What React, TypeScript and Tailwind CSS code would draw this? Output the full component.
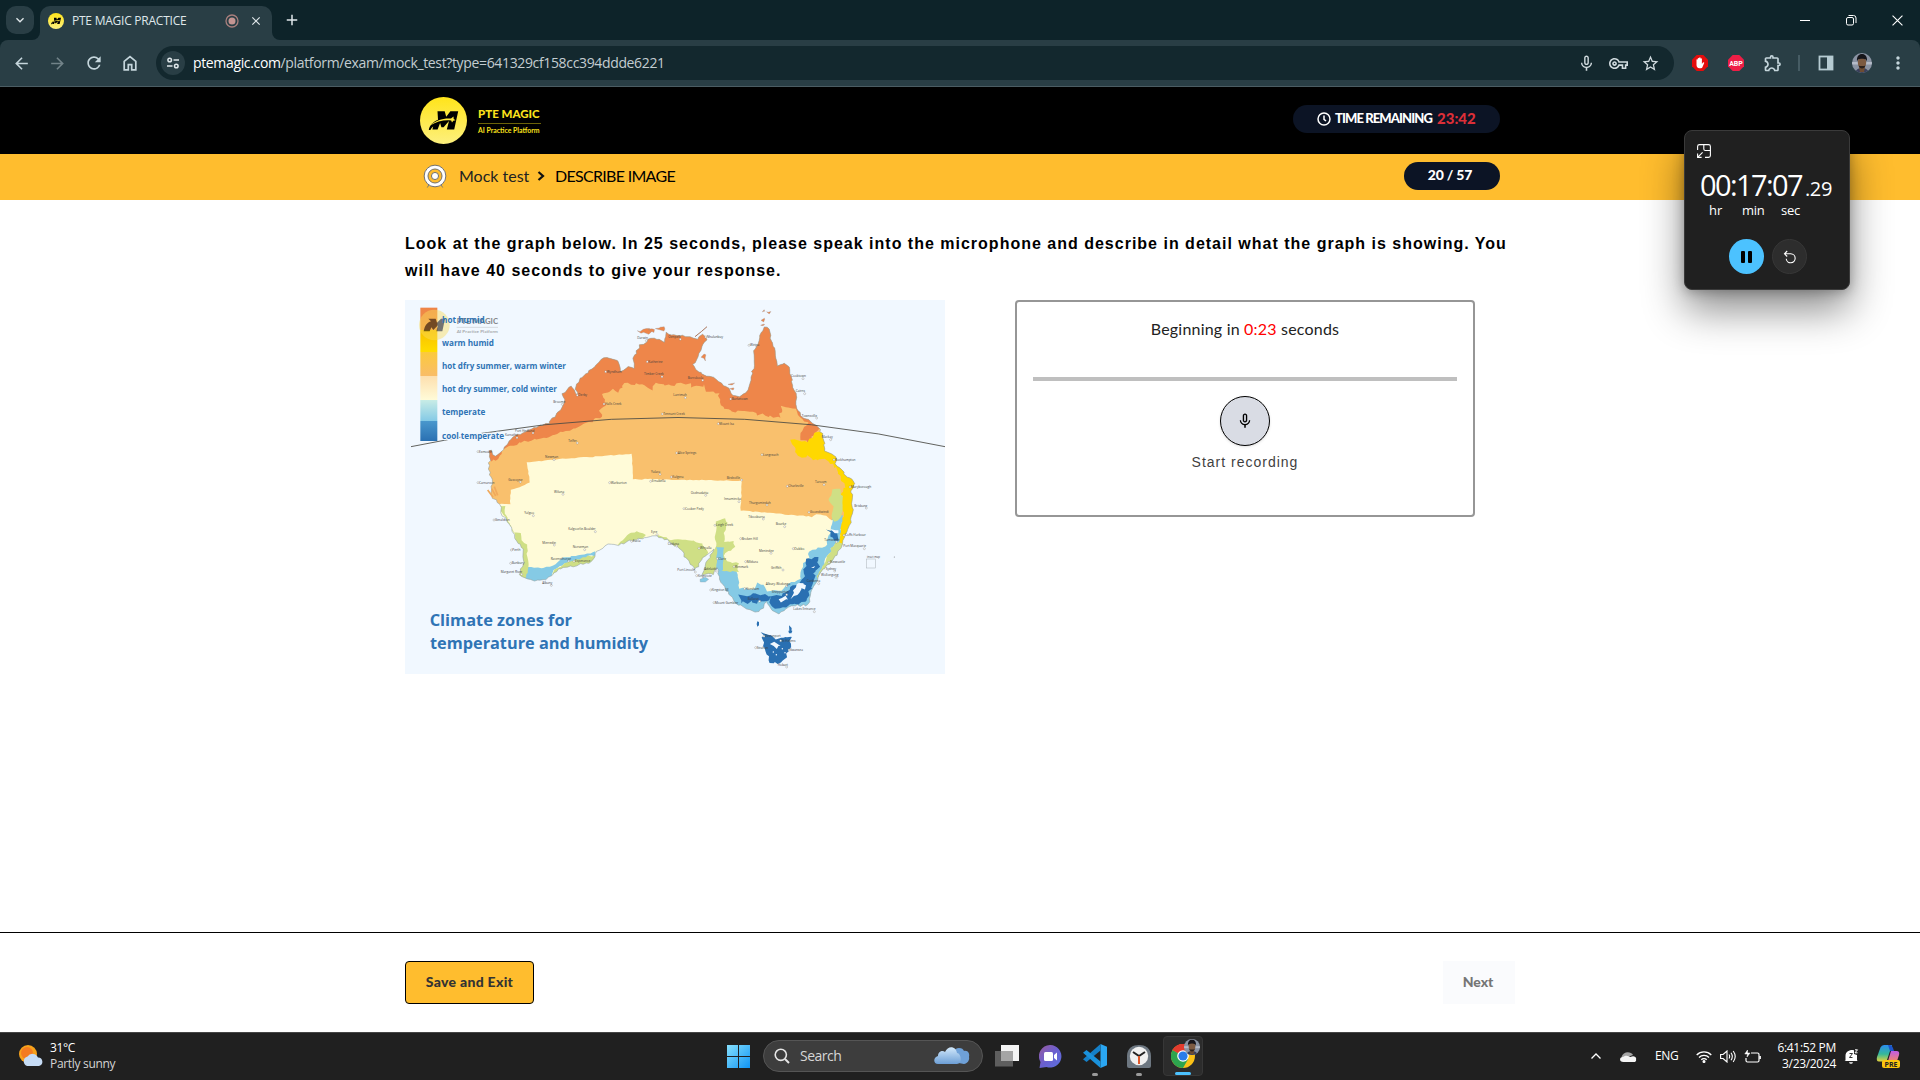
import React from "react";
import {
  MdArrowBack,
  MdArrowForward,
  MdRefresh,
  MdMicNone,
  MdStarBorder,
  MdOutlineVpnKey,
  MdOutlineExtension,
  MdMoreVert,
  MdClose,
  MdAdd,
  MdKeyboardArrowDown,
} from "react-icons/md";

type Pt = [number, number];

const UI = "font-['Open_Sans','Noto_Sans',sans-serif]";

/* ---------- shared marks ---------- */

function MagicMark({ className, shade = "#000" }: { className?: string; shade?: string }) {
  return (
    <svg viewBox="0 0 47 47" className={className}>
      <defs>
        <linearGradient id="magicFill" x1="0" y1="0" x2="0" y2="1">
          <stop offset="0" stopColor="#ffe41a" />
          <stop offset="1" stopColor="#fdf07e" />
        </linearGradient>
      </defs>
      <circle cx="23.5" cy="23.5" r="23.5" fill="url(#magicFill)" />
      <path
        d="M17.5 14.3h7.2l1.5 5.4 4.2-5.4h7.8l-4 18.2h-7.4l2.2-8.4-5.4 6.2h-2.2l-1.3-4.2-2.5 6.4h-5.2l.8-3c-1.200.8-2 2.200-2.800 3.400H8.800c.6-4.600 4.400-8.200 9.200-10.200z"
        fill={shade}
      />
      <path d="M10 28.500c6-5.500 13-7.500 21-7l2.500-2 .2 2.500 1.800 1.200-2.200.6-1.300 1.600-.8-2c-7-.9-14 .8-21.200 5.100z" fill="#ffe83c" />
    </svg>
  );
}

function Avatar({ className, id }: { className?: string; id: string }) {
  return (
    <svg viewBox="0 0 20 20" className={className}>
      <clipPath id={id}>
        <circle cx="10" cy="10" r="10" />
      </clipPath>
      <g clipPath={`url(#${id})`}>
        <rect width="20" height="20" fill="#8a93a3" />
        <rect y="9" width="20" height="2.500" fill="#b4bbc8" />
        <path d="M3 20c1-4 4-5 7-5s6 1 7 5z" fill="#39405c" />
        <path d="M7 14h6l-1 5H8z" fill="#6d4c33" />
        <ellipse cx="10" cy="9.500" rx="4.200" ry="5.500" fill="#7c5a41" />
        <path d="M5 8.500C4.500 3 7 1 10 1s5.500 2 5 7.500L14 6.500c-2-1-6-1-8 0z" fill="#16151a" />
        <path d="M6.500 12.500c1 4 6 4 7 0l-1.500.5h-4z" fill="#2b211d" />
      </g>
    </svg>
  );
}

/* ---------- browser chrome ---------- */

function TabStrip() {
  return (
    <div className="flex h-10 items-end bg-[#0d2329] text-[#dfe7ea]">
      <div className="ml-1.5 mb-1.5 flex size-7 items-center justify-center rounded-[10px] bg-[#293e45]">
        <MdKeyboardArrowDown className="size-4" />
      </div>
      <div className="relative ml-1.5 flex h-[34px] w-[232px] items-center rounded-t-[10px] bg-[#293e45] pb-[5px] pl-2">
        <span className="absolute -left-2 bottom-0 size-2 bg-[#293e45]">
          <span className="block size-2 rounded-br-lg bg-[#0d2329]" />
        </span>
        <span className="absolute -right-2 bottom-0 size-2 bg-[#293e45]">
          <span className="block size-2 rounded-bl-lg bg-[#0d2329]" />
        </span>
        <MagicMark className="size-4" />
        <span className="ml-2 w-[153px] whitespace-nowrap text-xs tracking-[-0.24px]">PTE MAGIC PRACTICE</span>
        <svg viewBox="0 0 14 14" className="size-3.5">
          <circle cx="7" cy="7" r="6" fill="none" stroke="#a87f7d" strokeWidth="1.300" />
          <circle cx="7" cy="7" r="3.500" fill="#c49592" />
        </svg>
        <MdClose className="ml-[10px] size-3.5" />
      </div>
      <MdAdd className="mb-[11px] ml-[11px] size-[18px]" />
      <div className="ml-auto mb-2 flex h-6 items-center gap-9 pr-[17px]">
        <svg viewBox="0 0 10 10" className="size-2.5">
          <path d="M0 5.500h10" stroke="#fff" />
        </svg>
        <svg viewBox="0 0 10 10" className="size-2.5 overflow-visible" fill="none" stroke="#fff">
          <rect x=".5" y="2.500" width="7" height="7.500" rx="1.500" />
          <path d="M2.500 .5h5A2.500 2.500 0 0 1 10 3v5" />
        </svg>
        <svg viewBox="0 0 10 10" className="size-[11px]" stroke="#fff">
          <path d="M.5 .5l9 9M9.500 .5l-9 9" />
        </svg>
      </div>
    </div>
  );
}

function Toolbar() {
  return (
    <div className="bg-[#0d2329]">
      <div className="flex h-[47px] items-center rounded-t-lg border-b border-[#4b5d63] bg-[#293e45] pl-3 text-[#c5d6dc]">
        <MdArrowBack className="size-[19px]" />
        <MdArrowForward className="ml-[17px] size-[19px] text-[#728389]" />
        <MdRefresh className="ml-[17px] size-5" />
        <svg viewBox="0 0 16 16" className="ml-[18px] size-4" fill="none" stroke="currentColor" strokeWidth="1.700">
          <path d="M2.200 14.800V6.300L8 1.700l5.800 4.600v8.500H9.700V9.700H6.300v5.100z" />
        </svg>
        <div className="ml-[18px] flex h-[34px] w-[1518px] items-center rounded-full bg-[#13282e] pl-[5px]">
          <div className="flex size-6 items-center justify-center rounded-full bg-[#293e45]">
            <svg viewBox="0 0 14 14" className="size-3.5" fill="none" stroke="#dfe7ea" strokeWidth="1.500">
              <circle cx="3.700" cy="4" r="1.800" />
              <path d="M7.500 4H13M1 10h5.500" />
              <circle cx="10.300" cy="10" r="1.800" />
            </svg>
          </div>
          <div className="ml-2 whitespace-nowrap text-sm tracking-[-0.35px] text-[#c3cdd1]">
            <span className="text-white">ptemagic.com</span>/platform/exam/mock_test?type=641329cf158cc394ddde6221
          </div>
          <div className="ml-auto flex items-center gap-[13px] pr-3.5 text-[#d0dade]">
            <MdMicNone className="size-[19px]" />
            <MdOutlineVpnKey className="size-[19px]" />
            <MdStarBorder className="size-[19px]" />
          </div>
        </div>
        <svg viewBox="0 0 16 16" className="ml-[18px] size-4">
          <path d="M4.700 0h6.600L16 4.700v6.600L11.300 16H4.700L0 11.300V4.700z" fill="#e40d0d" />
          <path d="M4.500 7.500V4.500q.6-.7 1.300 0V3.300q.7-.7 1.400 0v-.6q.7-.7 1.400 0v1q.7-.7 1.300 0V9l1-1.500q1-.6 1.400.2l-2 4.800q-.3.800-1.500.8H7.500Q4.500 13 4.500 10z" fill="#fff" />
        </svg>
        <div className="ml-5 flex size-4 items-center justify-center">
          <svg viewBox="0 0 16 16" className="size-4">
            <path d="M4.700 0h6.600L16 4.700v6.600L11.300 16H4.700L0 11.300V4.700z" fill="#ee1e46" />
            <text x="1.200" y="10.900" fontSize="8" fontWeight="700" fill="#fff" fontFamily="Roboto, sans-serif" textLength="13.600" lengthAdjust="spacingAndGlyphs">
              ABP
            </text>
          </svg>
        </div>
        <MdOutlineExtension className="ml-[19px] size-5" />
        <span className="ml-[15px] h-4 w-0.5 bg-[#465c64]" />
        <svg viewBox="0 0 16 16" className="ml-[18px] size-4">
          <rect x="1.500" y="1.500" width="13" height="13" fill="none" stroke="#b6cbd2" strokeWidth="1.800" />
          <path d="M9 1h6v14H9z" fill="#b6cbd2" />
        </svg>
        <Avatar id="avatarBar" className="ml-[18px] size-5" />
        <MdMoreVert className="ml-4 size-5" />
      </div>
    </div>
  );
}

/* ---------- climate map ---------- */

/* Breaks each edge into short steps and nudges them to look like a coastline. */
function rough(points: Pt[], amp: number, seed: number): string {
  let s = seed;
  const rnd = () => {
    s = (s * 16807) % 2147483647;
    return s / 2147483647 - 0.5;
  };
  const out: string[] = [];
  points.forEach((p, i) => {
    const q = points[(i + 1) % points.length];
    const n = Math.max(1, Math.round(Math.hypot(q[0] - p[0], q[1] - p[1]) / 9));
    for (let k = 0; k < n; k++) {
      const t = k / n;
      out.push(`${(p[0] + (q[0] - p[0]) * t + rnd() * amp).toFixed(1)} ${(p[1] + (q[1] - p[1]) * t + rnd() * amp).toFixed(1)}`);
    }
  });
  return `M${out.join("L")}Z`;
}

const land: Pt[] = [
  [255, 455], [262, 452], [270, 470], [278, 462], [300, 440], [325, 410], [380, 388], [430, 370], [462, 335], [478, 305],
  [472, 282], [497, 257], [515, 285], [513, 250], [540, 225], [575, 193], [608, 170], [640, 185], [648, 217], [668, 200],
  [688, 205], [683, 175], [705, 135], [740, 115], [780, 125], [785, 98], [825, 107], [845, 110], [875, 115], [890, 105],
  [905, 120], [885, 150], [880, 170], [862, 195], [885, 220], [925, 235], [970, 265], [985, 283], [1005, 288], [1022, 277],
  [1038, 240], [1047, 185], [1047, 155], [1065, 115], [1075, 82], [1087, 80], [1097, 115], [1110, 155], [1115, 195],
  [1137, 190], [1157, 210], [1160, 255], [1175, 285], [1175, 325], [1195, 350], [1245, 385], [1255, 420], [1262, 455],
  [1290, 465], [1293, 490], [1325, 530], [1348, 540], [1350, 550], [1338, 570], [1343, 620], [1340, 660], [1320, 705],
  [1310, 740], [1280, 785], [1255, 810], [1240, 835], [1215, 880], [1210, 915], [1160, 918], [1120, 940], [1095, 928],
  [1083, 905], [1077, 922], [1050, 938], [1005, 918], [985, 900], [963, 870], [940, 830], [938, 805], [925, 822],
  [893, 822], [905, 788], [925, 745], [905, 765], [888, 782], [868, 812], [845, 775], [825, 745], [785, 720], [745, 708],
  [685, 720], [640, 735], [610, 735], [570, 762], [555, 790], [515, 795], [460, 808], [425, 840], [385, 843], [345, 825],
  [345, 805], [358, 790], [352, 750], [328, 705], [310, 665], [290, 640], [285, 615], [258, 590], [262, 550], [252, 505],
];

const tan: Pt[] = [
  [220, 614], [315, 612], [318, 570], [375, 548], [365, 487], [455, 478], [680, 462], [683, 537], [1010, 543],
  [1007, 632], [1220, 650], [1235, 642], [1265, 648], [1280, 660], [1400, 640], [1400, 0], [220, 0],
];
const orange: Pt[] = [
  [240, 478], [275, 483], [300, 445], [350, 425], [450, 405], [520, 380], [560, 363], [590, 350], [585, 330], [602, 315],
  [592, 285], [620, 270], [640, 275], [660, 250], [720, 255], [740, 270], [755, 247], [800, 258], [825, 250], [855, 250],
  [860, 265], [900, 255], [905, 275], [940, 280], [945, 315], [990, 340], [995, 330], [1060, 343], [1125, 353],
  [1130, 320], [1170, 325], [1177, 345], [1207, 370], [1190, 390], [1187, 420], [1210, 425], [1245, 385], [1400, 385],
  [1400, 0], [220, 0], [220, 470],
];
const gold: Pt[] = [
  [1160, 420], [1190, 425], [1210, 425], [1235, 395], [1300, 395], [1400, 540], [1400, 740], [1300, 735], [1305, 690],
  [1315, 640], [1305, 590], [1318, 560], [1295, 505], [1255, 475], [1230, 482], [1210, 468], [1185, 473], [1170, 455],
];
const greens: Pt[][] = [
  [[1285, 570], [1305, 565], [1312, 590], [1310, 650], [1290, 665], [1278, 650], [1285, 620], [1270, 600]],
  [[1280, 745], [1300, 725], [1330, 735], [1250, 860], [1235, 830], [1258, 790]],
  [[935, 665], [960, 655], [967, 670], [958, 700], [958, 725], [985, 725], [990, 740], [955, 765], [965, 785], [1000, 790], [1000, 815], [940, 812], [935, 840], [880, 830], [915, 760], [935, 740], [930, 700]],
  [[760, 705], [800, 720], [860, 720], [890, 730], [910, 758], [870, 825], [740, 730]],
  [[640, 735], [665, 705], [695, 695], [722, 705], [700, 730]],
  [[275, 614], [300, 618], [298, 640], [325, 695], [345, 700], [350, 720], [365, 735], [370, 800], [360, 840], [320, 840], [330, 700]],
  [[430, 850], [450, 810], [480, 790], [550, 768], [580, 765], [570, 810], [460, 830]],
];
const sky: Pt[][] = [
  [
    [1283, 655], [1315, 645], [1312, 670], [1300, 730], [1275, 745], [1285, 748], [1260, 775], [1258, 795], [1245, 820], [1240, 850], [1230, 960],
    [985, 960], [920, 830], [950, 805], [995, 815], [1003, 865], [1050, 868], [1058, 850], [1075, 855], [1085, 875],
    [1130, 870], [1150, 850], [1185, 838], [1195, 790], [1210, 780], [1212, 755], [1240, 742], [1262, 740], [1275, 700],
  ],
  [[935, 742], [957, 742], [955, 812], [935, 815]],
  [[360, 798], [380, 803], [435, 802], [475, 775], [572, 756], [570, 768], [552, 765], [545, 785], [480, 792], [448, 808], [425, 850], [360, 840]],
];
const navy: Pt[][] = [
  [[1005, 885], [1040, 882], [1080, 884], [1100, 892], [1098, 902], [1078, 900], [1045, 908], [1008, 906]],
  [[1097, 890], [1125, 888], [1150, 870], [1175, 852], [1195, 838], [1202, 778], [1240, 775], [1240, 800], [1228, 820], [1222, 860], [1205, 905], [1150, 915], [1112, 928], [1098, 915]],
  [[1268, 687], [1285, 692], [1300, 705], [1298, 722], [1280, 715]],
];
const tasmania: Pt[] = [
  [1072, 998], [1115, 1015], [1157, 1008], [1158, 1040], [1142, 1070], [1120, 1092], [1095, 1084], [1078, 1045],
];
const snow: Pt[][] = [
  [[1168, 870], [1182, 848], [1195, 848], [1185, 880], [1160, 898]],
  [[1125, 895], [1140, 888], [1150, 898], [1130, 905]],
  [[1188, 850], [1205, 855], [1200, 865], [1188, 862]],
  [[1280, 690], [1298, 688], [1300, 698], [1288, 700]],
  [[1222, 805], [1230, 800], [1228, 808]],
];

const cities: [number, number, string][] = [
  [697, 118, "Darwin"], [790, 114, "Oenpelli"], [730, 188, "Katherine"], [605, 218, "Wyndham"], [717, 226, "Timber Creek"],
  [520, 289, "Derby"], [445, 309, "Broome"], [600, 315, "Halls Creek"], [775, 345, "Tennant Creek"], [330, 395, "Port Hedland"],
  [300, 409, "Karratha"], [222, 458, "Exmouth"], [490, 425, "Telfer"], [420, 475, "Newman"], [738, 519, "Yulara"],
  [802, 534, "Kulgera"], [617, 551, "Warburton"], [740, 547, "Ernabella"], [222, 551, "Carnarvon"], [310, 542, "Gascoyne"],
  [447, 579, "Wiluna"], [358, 643, "Yalgoo"], [270, 663, "Geraldton"], [490, 691, "Kalgoorlie-Boulder"], [412, 731, "Merredin"],
  [503, 745, "Norseman"], [322, 753, "Perth"], [320, 793, "Bunbury"], [287, 819, "Margaret River"], [412, 852, "Albany"],
  [437, 779, "Ravensthorpe"], [510, 787, "Esperance"], [683, 727, "Eucla"], [738, 700, "Eyre"], [788, 734, "Ceduna"],
  [805, 289, "Larrimah"], [905, 114, "Nhulunbuy"], [1035, 139, "Weipa"], [848, 237, "Borroloola"], [980, 300, "Burketown"],
  [1158, 232, "Cooktown"], [1172, 277, "Cairns"], [1190, 350, "Townsville"], [1250, 415, "Mackay"], [943, 374, "Mount Isa"],
  [818, 462, "Alice Springs"], [1074, 467, "Longreach"], [1290, 482, "Rockhampton"], [965, 536, "Birdsville"], [1230, 550, "Taroom"],
  [857, 582, "Oodnadatta"], [957, 601, "Innamincka"], [840, 629, "Coober Pedy"], [1032, 611, "Thargomindah"], [1150, 562, "Charleville"],
  [1338, 564, "Maryborough"], [1348, 620, "Brisbane"], [1215, 640, "Goondiwindi"], [1030, 653, "Tibooburra"], [1112, 676, "Bourke"],
  [1010, 719, "Broken Hill"], [1320, 709, "Coffs Harbour"], [1315, 742, "Port Macquarie"], [1168, 749, "Dubbo"], [1062, 756, "Menindee"],
  [933, 679, "Leigh Creek"], [885, 748, "Whyalla"], [940, 779, "Clare"], [1025, 788, "Mildura"], [990, 803, "Renmark"],
  [1098, 806, "Griffith"], [1275, 790, "Newcastle"], [1262, 809, "Sydney"], [1248, 828, "Wollongong"], [898, 809, "Adelaide"],
  [1082, 854, "Albury-Wodonga"], [1022, 869, "Horsham"], [1100, 880, "Shepparton"], [1028, 900, "Ballarat"], [1205, 847, "Canberra"],
  [920, 873, "Kingston SE"], [930, 911, "Mount Gambier"], [1165, 931, "Lakes Entrance"], [878, 830, "Kingscote"], [817, 812, "Port Lincoln"],
  [1080, 1012, "Devonport"], [1130, 1025, "St Helens"], [1055, 1046, "Strahan"], [1155, 1053, "Swansea"], [1118, 1097, "Hobart"],
  [1258, 722, "Tamworth"],
];

const labels: [string, number, number][] = [
  ["hot humid", 69, 128],
  ["warm humid", 137, 156],
  ["hot dfry summer, warm winter", 207, 372],
  ["hot dry summer, cold winter", 277, 345],
  ["temperate", 346, 130],
  ["cool temperate", 416, 186],
];

function ClimateMap() {
  const isles: [number, number, number, number][] = [
    [722, 95, 22, 9], [768, 88, 14, 7], [740, 90, 8, 6], [898, 172, 7, 9], [980, 253, 8, 4], [1076, 60, 5, 4], [1074, 74, 4, 3], [1078, 33, 3, 2], [1092, 38, 4, 2], [983, 268, 5, 2],
  ];
  return (
    <svg viewBox="0 0 1620 1122" className="h-[374px] w-[540px] bg-[#f1f8ff]">
      <defs>
        <clipPath id="landClip">
          <path d={rough(land, 7, 77)} />
        </clipPath>
        <linearGradient id="keyBar" x1="0" y1="0" x2="0" y2="1">
          <stop offset="0" stopColor="#ee8448" />
          <stop offset=".165" stopColor="#f3963f" />
          <stop offset=".166" stopColor="#f8c000" />
          <stop offset=".33" stopColor="#ffdc00" />
          <stop offset=".331" stopColor="#fbca3c" />
          <stop offset=".511" stopColor="#f9bd68" />
          <stop offset=".512" stopColor="#fddfae" />
          <stop offset=".692" stopColor="#fffbd8" />
          <stop offset=".693" stopColor="#c8ece6" />
          <stop offset=".848" stopColor="#85cae6" />
          <stop offset=".849" stopColor="#4a98cd" />
          <stop offset="1" stopColor="#2a70b2" />
        </linearGradient>
      </defs>

      <g clipPath="url(#landClip)">
        <rect width="1620" height="1122" fill="#fffbd8" />
        <path d={rough(tan, 3, 5)} fill="#f9c06d" />
        <path d={rough(orange, 8, 9)} fill="#ee864a" />
        <path d={rough(gold, 9, 11)} fill="#ffd800" />
        {sky.map((p, i) => (
          <path key={i} d={rough(p, 5, 21 + i)} fill="#85cae5" />
        ))}
        {greens.map((p, i) => (
          <path key={i} d={rough(p, 5, 31 + i)} fill="#cfdf85" />
        ))}
        <path d={rough(sky[1], 4, 3)} fill="#85cae5" />
        {navy.map((p, i) => (
          <path key={i} d={rough(p, 11, 41 + i)} fill="#2a70b2" />
        ))}
        {snow.map((p, i) => (
          <path key={i} d={rough(p, 8, 51 + i)} fill="#f1f8ff" />
        ))}
      </g>
      <path d={rough(land, 7, 77)} fill="none" stroke="#8c9aa3" strokeWidth="1.600" />
      {isles.map(([x, y, rx, ry], i) => (
        <path
          key={i}
          d={rough([[x - rx, y], [x, y - ry], [x + rx, y - ry / 2], [x + rx / 2, y + ry]], 6, 61 + i)}
          fill="#ee864a"
          stroke="#9a8f88"
          strokeWidth="1"
        />
      ))}
      <path d="M870 110l20-16 16-14" fill="none" stroke="#a9745a" strokeWidth="3" />
      <path d="M248 570l16 22M260 566l12 22M268 560l10 26" stroke="#f0a95c" strokeWidth="5" fill="none" />
      <path d="M885 838l16-6 10 6-10 8-15 0z" fill="#85cae5" stroke="#8c9aa3" strokeWidth="1" />
      <path d={rough(tasmania, 10, 71)} fill="#2a70b2" />
      <path d={rough([[1098, 1031], [1110, 1025], [1127, 1036], [1112, 1044]], 7, 73)} fill="#f1f8ff" />
      <g fill="#f1f8ff">
        {[[1105, 1056], [1132, 1046], [1114, 1064], [1140, 1058]].map(([x, y], i) => (
          <circle key={i} cx={x} cy={y} r="2.200" />
        ))}
      </g>
      <path d="M1057 964l5 2 0 10-5 4-2-8zM1152 976l8 8-1 16 2-2-8-6zM1150 992l12 0-2 8-8 0z" fill="#2a70b2" />

      <path d="M18 440Q819 265 1620 440" fill="none" stroke="#4a4a44" strokeWidth="2.600" />
      <rect x="1384" y="777" width="27" height="27" fill="none" stroke="#a9b0b6" strokeWidth="1.500" />
      <text x="1386" y="775" fontSize="8.500" fill="#444">inset map</text>
      <circle cx="1468" cy="771" r="1.500" fill="#777" />

      <g fontFamily="'Open Sans', sans-serif" fontSize="9.500" fill="#3f3f3f">
        {cities.map(([x, y, name]) => (
          <g key={name}>
            <circle cx={x + (name.length % 2 ? -3 : name.length * 4.500)} cy={y + (name.length % 2 ? -3 : 4)} r="3" fill="#fff" stroke="#777" strokeWidth="1" />
            <text x={x} y={y}>{name}</text>
          </g>
        ))}
      </g>

      <rect x="46" y="23" width="51" height="400" fill="url(#keyBar)" />
      <g opacity=".6">
        <circle cx="88" cy="75" r="46" fill="#f9dc5c" opacity=".75" />
        <path d="M70 56h22l4 12 12-12h12l-8 38H94l5-18-14 14-6-8-5 12H56c4-18 10-26 22-30z" fill="#201a10" />
        <text x="155" y="72" fontFamily="Lato, sans-serif" fontWeight="900" fontSize="23" fill="#444" textLength="124" lengthAdjust="spacingAndGlyphs">PTE MAGIC</text>
        <path d="M155 82h124" stroke="#999" strokeWidth="1.500" />
        <text x="155" y="99" fontFamily="Lato, sans-serif" fontWeight="700" fontSize="13" fill="#777" textLength="124" lengthAdjust="spacingAndGlyphs">AI Practice Platform</text>
      </g>
      {labels.map(([text, y, w], i) => (
        <g key={text} fontFamily="'Open Sans', sans-serif" fontSize="25" fontWeight="700">
          <text
            x="111"
            y={y}
            textLength={w}
            lengthAdjust="spacingAndGlyphs"
            fill="#2f74b5"
            stroke="#f1f8ff"
            strokeWidth={i === 5 ? 7 : 0}
            paintOrder="stroke"
          >
            {text}
          </text>
        </g>
      ))}

      <g fontFamily="'Open Sans', sans-serif" fontSize="50" fontWeight="700" fill="#2f74b5">
        <text x="74" y="977" textLength="427" lengthAdjust="spacingAndGlyphs">Climate zones for</text>
        <text x="75" y="1047" textLength="654" lengthAdjust="spacingAndGlyphs">temperature and humidity</text>
      </g>
    </svg>
  );
}

/* ---------- exam page ---------- */

function ExamHeader() {
  return (
    <>
      <header className="h-[67px] bg-black">
        <div className="mx-auto flex h-full w-[1110px] items-center justify-between pl-[15px] pr-[15px]">
          <div className="flex items-center gap-[11px]">
            <MagicMark className="size-[47px]" />
            <div className="w-[63px] font-['Lato',sans-serif] text-[#fbe21c]">
              <div className="whitespace-nowrap border-b border-[#6b6208] pb-[2px] text-[11.5px] font-black leading-[14px]">PTE MAGIC</div>
              <div className="whitespace-nowrap pt-[3px] text-[6.9px] font-bold leading-[7px]">AI Practice Platform</div>
            </div>
          </div>
          <div className="mb-[3px] flex h-7 w-[207px] items-center rounded-full bg-[#0c1425] pb-px pl-6 font-['Lato',sans-serif] text-sm font-bold text-white">
            <svg viewBox="0 0 14 14" className="size-3.5" fill="none" stroke="#fff" strokeWidth="1.500">
              <circle cx="7" cy="7" r="6" />
              <path d="M7 3.500V7.300l2 1.700" />
            </svg>
            <span className="ml-[4px] w-[102px] whitespace-nowrap text-[13px] font-black tracking-[-0.9px]">TIME REMAINING</span>
            <span className="text-[15px] font-black text-[#dc2f38]">23:42</span>
          </div>
        </div>
      </header>
      <div className="h-[46px] bg-[#ffbd2e]">
        <div className="mx-auto flex h-full w-[1110px] items-center px-[15px] pb-0.5 font-['Lato',sans-serif] text-base text-[#222]">
          <svg viewBox="0 0 24 25" className="ml-[3px] size-6" fill="none">
            <path d="M6 21l-2 3.500M18 21l2 3.500" stroke="#777" />
            <circle cx="12" cy="12.500" r="11.300" fill="#fff" stroke="#6b6b6b" />
            <circle cx="12" cy="12.500" r="7.300" fill="#ffbd2e" stroke="#6b6b6b" />
            <circle cx="12" cy="12.500" r="3.700" fill="#fff" stroke="#6b6b6b" />
          </svg>
          <span className="ml-[12px] w-[70px] whitespace-nowrap pb-px">Mock test</span>
          <svg viewBox="0 0 8 10" className="ml-2 h-2.5 w-2" fill="none" stroke="#111" strokeWidth="2.200">
            <path d="M1.500 1l4.500 4-4.500 4" />
          </svg>
          <span className="ml-[10px] whitespace-nowrap pb-px tracking-[-0.7px] text-black">DESCRIBE IMAGE</span>
          <span className="ml-auto flex h-7 w-24 items-center justify-center rounded-full bg-[#0c1425] pb-[3px] pr-1 text-sm font-black tracking-[-0.2px] text-white">20 / 57</span>
        </div>
      </div>
    </>
  );
}

function RecorderCard() {
  return (
    <section className="ml-[70px] flex h-[217px] w-[460px] flex-col items-center rounded border-2 border-[#969696] px-4 pt-[15px]">
      <p className="font-['Lato',sans-serif] text-base leading-6 tracking-[0.2px] text-[#222]">
        Beginning in <span className="text-[#ff0000]">0:23</span> seconds
      </p>
      <div className="mt-9 h-1 w-[424px] bg-[#bfbfbf]" />
      <button className="mt-[15px] flex size-[50px] items-center justify-center rounded-full border border-black bg-[#d9dce4] shadow-sm">
        <MdMicNone className="size-[18px] text-black" />
      </button>
      <p className="mt-1.5 font-['Liberation_Sans',sans-serif] text-sm leading-5 tracking-[1px] text-[#3f3f3f]">Start recording</p>
    </section>
  );
}

function ExamPage() {
  return (
    <main className="flex h-[945px] flex-col bg-white">
      <ExamHeader />
      <div className="mx-auto w-[1110px] flex-1 pt-[30px]">
        <p className="whitespace-nowrap font-['Liberation_Sans',sans-serif] text-base font-bold leading-[27px] tracking-[1px] text-black">
          Look at the graph below. In 25 seconds, please speak into the microphone and describe in detail what the graph is showing. You
          <br />
          will have 40 seconds to give your response.
        </p>
        <div className="mt-4 flex items-start">
          <ClimateMap />
          <RecorderCard />
        </div>
      </div>
      <footer className="h-[100px] border-t border-black">
        <div className="mx-auto flex w-[1110px] justify-between pt-7 font-['Lato',sans-serif] text-sm font-black">
          <button className="h-[43px] w-[129px] rounded border border-black bg-[#ffbd2e] pb-0.5 tracking-[0.3px] text-[#333]">Save and Exit</button>
          <button className="h-[43px] w-[72px] bg-[#fafbfd] pb-0.5 pr-0.5 text-[#757575]">Next</button>
        </div>
      </footer>
    </main>
  );
}

/* ---------- stopwatch window ---------- */

function Stopwatch() {
  return (
    <aside className="absolute left-[1684px] top-[130px] flex h-40 w-[166px] flex-col rounded-lg border border-[#3a3a3a] bg-[#202020] text-white shadow-[0_20px_40px_rgba(0,0,0,0.45),0_2px_12px_rgba(0,0,0,0.25)]">
      <svg viewBox="0 0 14 14" className="ml-3 mt-[13px] size-3.5" fill="none" stroke="#fff" strokeWidth="1.100">
        <path d="M.6 6V2.500A1.900 1.900 0 0 1 2.500.6h9a1.900 1.900 0 0 1 1.900 1.900v9a1.900 1.900 0 0 1-1.900 1.900H8" />
        <path d="M6.800.8V5q0 1.500 1.500 1.500h5M.6 13.400l5-5M.6 9.500v3.900h4" />
      </svg>
      <div className="ml-[15px] mt-[7px] flex h-[37px] items-baseline whitespace-nowrap text-[29px] leading-10 tracking-[-1.6px]">
        <span className="w-[105px]">00:17:07</span>
        <span className="text-[20px] tracking-[-0.4px]">.29</span>
      </div>
      <div className="flex text-[13px] leading-4">
        <span className="ml-6 w-3">hr</span>
        <span className="ml-[21px] w-6 tracking-[-0.3px]">min</span>
        <span className="ml-[15px] tracking-[-0.2px]">sec</span>
      </div>
      <div className="ml-11 mt-[21px] flex gap-[8px]">
        <span className="flex size-[35px] items-center justify-center gap-[3px] rounded-full bg-[#4cc2ff]">
          <span className="h-3 w-1 rounded-[1px] bg-black" />
          <span className="h-3 w-1 rounded-[1px] bg-black" />
        </span>
        <span className="flex size-[35px] items-center justify-center rounded-full border border-[#373737] bg-[#2d2d2d]">
          <svg viewBox="0 0 14 14" className="size-3.5" fill="none" stroke="#fff" strokeWidth="1.100">
            <path d="M4.200 1L1.500 3.800l2.700 2.700M1.500 3.800h6.300a4.500 4.500 0 1 1-4.600 5" />
          </svg>
        </span>
      </div>
    </aside>
  );
}

/* ---------- taskbar ---------- */

function Taskbar() {
  return (
    <div className="flex h-12 items-center border-t border-[#454545] bg-[#202020] pb-px text-white">
      <svg viewBox="0 0 26 24" className="ml-[18px] h-6 w-[26px]">
        <circle cx="10" cy="10" r="9" fill="#f7a21b" />
        <circle cx="9" cy="9" r="6" fill="#f47b20" />
        <path d="M9 22a5 5 0 0 1 .5-9.500 6 6 0 0 1 10.500 1 4.300 4.300 0 0 1 1 8.500z" fill="#c6dcf5" />
      </svg>
      <div className="ml-1.5 w-[677px] text-xs leading-4">
        <div className="tracking-[-0.4px]">31°C</div>
        <div className="tracking-[-0.32px] text-[#d5d5d5]">Partly sunny</div>
      </div>
      <svg viewBox="0 0 23 23" className="size-[23px]">
        <defs>
          <linearGradient id="winFill" x1="0" y1="0" x2="1" y2="1">
            <stop offset="0" stopColor="#86e0fd" />
            <stop offset="1" stopColor="#0f94f5" />
          </linearGradient>
        </defs>
        <path d="M0 0h11v11H0zM12 0h11v11H12zM0 12h11v11H0zM12 12h11v11H12z" fill="url(#winFill)" />
      </svg>
      <div className="ml-[13px] flex h-8 w-[220px] items-center rounded-full border border-[#555] bg-[#3d3d3d] pl-[10px] pr-3">
        <svg viewBox="0 0 16 16" className="size-4" fill="none" stroke="#e6e6e6" strokeWidth="1.600">
          <circle cx="6.800" cy="6.800" r="5.600" />
          <path d="M11 11l4 4" strokeWidth="2" />
        </svg>
        <span className="ml-[10px] text-sm tracking-[-0.5px] text-[#d6d6d6]">Search</span>
        <svg viewBox="0 0 36 18" className="ml-auto h-[18px] w-9">
          <defs>
            <linearGradient id="cloudFill" x1="0" y1="0" x2="0" y2="1">
              <stop offset="0" stopColor="#d3e9fb" />
              <stop offset="1" stopColor="#6d9fd6" />
            </linearGradient>
          </defs>
          <path d="M19 15c-2-8 1-14 6-14 3 0 4 1 5 3 4-1 6 3 5 6 1 3-2 7-5 7z" fill="#6fa1d8" />
          <path d="M4 17c-5 0-5-7 0-8C4 4 9 3 11 5c3-7 11-6 12 1 4 0 6 11 0 11z" fill="url(#cloudFill)" />
        </svg>
      </div>
      <svg viewBox="0 0 24 22" className="ml-3 h-[22px] w-6">
        <path d="M6 0h18v16H6z" fill="#f4f4f4" />
        <path d="M0 6h18v15.500H0z" fill="#6a6a6a" opacity=".85" />
        <path d="M6 6h12v10H6z" fill="#a5a5a5" />
      </svg>
      <svg viewBox="0 0 23 23" className="ml-5 size-[23px]">
        <defs>
          <linearGradient id="chatFill" x1="0" y1="0" x2="1" y2="1">
            <stop offset="0" stopColor="#9a5b9e" />
            <stop offset=".5" stopColor="#6a5fd0" />
            <stop offset="1" stopColor="#5a72e0" />
          </linearGradient>
        </defs>
        <path d="M11.500 0a11.300 11.300 0 1 1-4 22L.5 23l1-6A11.300 11.300 0 0 1 11.500 0z" fill="url(#chatFill)" />
        <rect x="5" y="7" width="9" height="9" rx="1.500" fill="#fff" />
        <path d="M15 10l3-2.500v8L15 13z" fill="#fff" />
      </svg>
      <div className="relative ml-[21px] flex h-12 w-6 items-center">
        <svg viewBox="0 0 24 24" className="size-6">
          <path d="M17.500 0L24 2.800v18.400L17.500 24V0z" fill="#2aa6f2" />
          <path d="M17.500 0v6.500L3.500 18 0 15.200z" fill="#1580c8" />
          <path d="M17.500 24v-6.500L3.500 6 0 8.800z" fill="#1a92dc" />
        </svg>
        <span className="absolute bottom-1 left-[9px] h-[3px] w-1.5 rounded-full bg-[#9a9a9a]" />
      </div>
      <div className="relative ml-5 flex h-12 w-6 items-center">
        <svg viewBox="0 0 24 24" className="size-6">
          <path d="M12 1C18 1 24 4 24 12v10q0 2-2 2H2q-2 0-2-2V12C0 4 6 1 12 1z" fill="#6d7781" />
          <circle cx="12" cy="12" r="9.200" fill="#f0f0f0" />
          <path d="M6 8l6 4 6-4" fill="none" stroke="#222" strokeWidth="2" />
          <path d="M12 12v8" stroke="#e0582a" strokeWidth="2" />
        </svg>
        <span className="absolute bottom-1 left-[9px] h-[3px] w-1.5 rounded-full bg-[#9a9a9a]" />
      </div>
      <div className="relative ml-3 flex size-10 items-center justify-center rounded border border-[#373737] bg-[#2c2c2c]">
        <svg viewBox="0 0 24 24" className="size-6">
          <circle cx="12" cy="12" r="12" fill="#fbc116" />
          <path d="M12 12L1.600 6A12 12 0 0 1 22.400 6z" fill="#e33b2e" />
          <path d="M1.600 6A12 12 0 0 0 12 24l5.200-9L12 12z" fill="#2da44e" />
          <path d="M22.400 6H12l-5 3-5.400-3A12 12 0 0 1 22.400 6z" fill="#e33b2e" />
          <circle cx="12" cy="12" r="5.800" fill="#fff" />
          <circle cx="12" cy="12" r="4.600" fill="#2b7de9" />
        </svg>
        <Avatar id="avatarTask" className="absolute right-[2px] top-0.5 size-4" />
        <span className="absolute bottom-0 left-[11px] h-[3px] w-4 rounded-full bg-[#4cc2ff]" />
      </div>

      <div className="ml-auto flex h-full items-center pr-5">
        <svg viewBox="0 0 10 6" className="h-1.5 w-2.5" fill="none" stroke="#fff" strokeWidth="1.300">
          <path d="M.5 5.500L5 1l4.500 4.500" />
        </svg>
        <svg viewBox="0 0 17 11" className="ml-[19px] h-[11px] w-[17px]">
          <path d="M1.500 6C3 0 11 0 13 4l-8 3z" fill="#a5a5a5" />
          <path d="M3.500 11c-5 0-4-5.500-.5-5 3-2.500 6-1 7.500 0 3-2 6.500 0 5.500 2.500.5 1.500-.5 2.500-2 2.500z" fill="#f5f5f5" />
        </svg>
        <span className="ml-[18px] w-[24px] text-xs tracking-[-0.4px]">ENG</span>
        <svg viewBox="0 0 16 13" className="ml-[17px] h-[13px] w-4" fill="none" stroke="#fff" strokeWidth="1.300">
          <path d="M.7 5a10.300 10.300 0 0 1 14.600 0M3 7.500a7 7 0 0 1 10 0M5.300 9.800a3.800 3.800 0 0 1 5.400 0" />
          <circle cx="8" cy="11.500" r=".9" fill="#fff" />
        </svg>
        <svg viewBox="0 0 16 13" className="ml-2 h-[13px] w-4" fill="none" stroke="#fff" strokeWidth="1.100">
          <path d="M.6 4.500h2.500L7 1v11L3.100 8.500H.6zM9 4.500q1.300 2 0 4M11 2.700q2.600 3.800 0 7.600M13.200 1q4 5.500 0 11" />
        </svg>
        <svg viewBox="0 0 17 13" className="ml-2 h-[13px] w-[17px]" fill="none" stroke="#fff" strokeWidth="1.200">
          <path d="M7 3h6.500q1.500 0 1.500 1.500v6q0 1.500-1.500 1.500h-10Q2 12 2 10.500V8M16.300 6v3" />
          <path d="M3.500 0L.8 4h2.700L3 7l3-4H3.500z" fill="#fff" strokeWidth=".5" />
        </svg>
        <div className="ml-[9px] w-[66px] whitespace-nowrap text-right text-xs leading-4 tracking-[-0.32px]">
          <div>6:41:52 PM</div>
          <div>3/23/2024</div>
        </div>
        <svg viewBox="0 0 15 15" className="ml-2 size-[15px]">
          <path d="M1.500 11.500V7C1.500 1 9 .5 10 1.500V5l3 1v5.500l1 .5H.5z" fill="#fff" />
          <path d="M5 13.300h4q-.5 1.500-2 1.500t-2-1.500z" fill="#fff" />
          <path d="M5.500 4.500h3l-3 4h3" fill="none" stroke="#333" strokeWidth="1" />
          <path d="M11 .8h2.500l-2.500 3h2.500" fill="none" stroke="#fff" strokeWidth="1" />
        </svg>
        <svg viewBox="0 0 24 24" className="ml-[17px] size-6">
          <defs>
            <linearGradient id="coLeft" x1="0" y1="0" x2="0" y2="1">
              <stop offset="0" stopColor="#2b8df0" />
              <stop offset=".55" stopColor="#35b89a" />
              <stop offset="1" stopColor="#e5d33a" />
            </linearGradient>
            <linearGradient id="coRight" x1="0" y1="0" x2="0" y2="1">
              <stop offset="0" stopColor="#c05be8" />
              <stop offset="1" stopColor="#f1856b" />
            </linearGradient>
          </defs>
          <path d="M8 1h8l-5 15q-.5 1.500-2 1.500H3Q0 17.500 1 13L4.500 3.500Q5.500 1 8 1z" fill="url(#coLeft)" />
          <path d="M14 1q2 0 3 3l1 3h-4l-2-6z" fill="#1c55c8" />
          <path d="M15 7h5.500Q24 7 23 11l-2 6h-9z" fill="url(#coRight)" />
          <rect x="6" y="16" width="18" height="8" rx="2" fill="#fcc50f" />
          <text x="15" y="22.700" textAnchor="middle" fontSize="7" fontWeight="700" fontFamily="'Open Sans', sans-serif" fill="#222">PRE</text>
        </svg>
      </div>
    </div>
  );
}

export default function App() {
  return (
    <div className={`relative h-[1080px] w-[1920px] overflow-hidden ${UI}`}>
      <TabStrip />
      <Toolbar />
      <ExamPage />
      <Taskbar />
      <Stopwatch />
    </div>
  );
}
